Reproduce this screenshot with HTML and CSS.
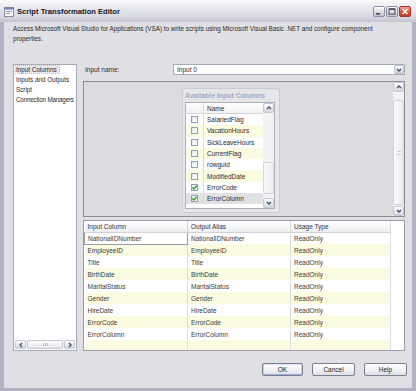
FILE: index.html
```html
<!DOCTYPE html>
<html>
<head>
<meta charset="utf-8">
<link rel="stylesheet" href="styles.css">
</head>
<body>
<div class="window">
  <div class="titlebar">
    <svg class="appicon" viewBox="0 0 10 11" width="10" height="11">
      <rect x="0.5" y="1.5" width="9" height="9" fill="#f4f4f4" stroke="#8a8a9a"/>
      <rect x="0.5" y="1.5" width="9" height="2" fill="#6f84b0"/>
      <rect x="2" y="5" width="6" height="1" fill="#9a9aa8"/>
      <rect x="2" y="7" width="4" height="1" fill="#9a9aa8"/>
    </svg>
    <span class="title">Script Transformation Editor</span>
    <div class="controls">
      <span class="cbtn"><svg viewBox="0 0 12 11" width="12" height="11"><rect x="3" y="7" width="4" height="1.6" fill="#4a4a5a"/></svg></span>
      <span class="cbtn"><svg viewBox="0 0 12 11" width="12" height="11"><rect x="3" y="2.8" width="6" height="5.4" fill="none" stroke="#4a4a5a" stroke-width="1"/><rect x="3" y="2.5" width="6" height="1.4" fill="#4a4a5a"/></svg></span>
      <span class="cbtn close"><svg viewBox="0 0 12 11" width="12" height="11"><path d="M3.5 3 L8.5 8 M8.5 3 L3.5 8" stroke="#fff" stroke-width="1.6"/></svg></span>
    </div>
  </div>
  <div class="frame">
    <p class="desc">Access Microsoft Visual Studio for Applications (VSA) to write scripts using Microsoft Visual Basic .NET and configure component<br>properties.</p>
    <div class="main">
      <div class="nav">
        <ul class="navlist">
          <li><span class="navsel">Input Columns</span></li>
          <li>Inputs and Outputs</li>
          <li>Script</li>
          <li class="tight">Connection Managers</li>
        </ul>
        <div class="hscroll">
          <span class="sbtn"><svg viewBox="0 0 6 6" width="6" height="6"><path d="M4 1 L2 3 L4 5" fill="none" stroke="#3d4f73" stroke-width="1.3"/></svg></span>
          <span class="hthumb"><span class="grip-h"></span></span>
          <span class="sbtn"><svg viewBox="0 0 6 6" width="6" height="6"><path d="M2 1 L4 3 L2 5" fill="none" stroke="#3d4f73" stroke-width="1.3"/></svg></span>
        </div>
      </div>
      <div class="content">
        <div class="namerow">
          <span class="namelabel">Input name:</span>
          <div class="combo">
            <span class="comboval">Input 0</span>
            <span class="ddbtn"><svg viewBox="0 0 6 6" width="6" height="6"><path d="M1 2 L3 4 L5 2" fill="none" stroke="#3d4f73" stroke-width="1.4"/></svg></span>
          </div>
        </div>
        <div class="upper">
          <div class="canvas">
            <div class="avail">
              <div class="availtitle">Available Input Columns</div>
              <div class="ilist">
                <div class="irows">
                  <div class="irow ihead"><span class="ichk"></span><span class="iname">Name</span></div>
                  <div class="irow"><span class="ichk"><span class="cb"></span></span><span class="iname">SalariedFlag</span></div>
                  <div class="irow y"><span class="ichk"><span class="cb"></span></span><span class="iname">VacationHours</span></div>
                  <div class="irow"><span class="ichk"><span class="cb"></span></span><span class="iname">SickLeaveHours</span></div>
                  <div class="irow y"><span class="ichk"><span class="cb"></span></span><span class="iname">CurrentFlag</span></div>
                  <div class="irow"><span class="ichk"><span class="cb"></span></span><span class="iname">rowguid</span></div>
                  <div class="irow y"><span class="ichk"><span class="cb"></span></span><span class="iname">ModifiedDate</span></div>
                  <div class="irow"><span class="ichk"><span class="cb on"><svg viewBox="0 0 7 7" width="7" height="7"><path d="M1.3 3.4 L2.9 5 L5.8 1.6" fill="none" stroke="#22a022" stroke-width="1.3"/></svg></span></span><span class="iname">ErrorCode</span></div>
                  <div class="irow sel"><span class="ichk"><span class="cb on"><svg viewBox="0 0 7 7" width="7" height="7"><path d="M1.3 3.4 L2.9 5 L5.8 1.6" fill="none" stroke="#22a022" stroke-width="1.3"/></svg></span></span><span class="iname">ErrorColumn</span></div>
                </div>
                <div class="vscroll small">
                  <span class="sbtn"><svg viewBox="0 0 6 6" width="6" height="6"><path d="M1 4 L3 2 L5 4" fill="none" stroke="#3d4f73" stroke-width="1.3"/></svg></span>
                  <span class="vtrack"><span class="vthumb small-thumb"></span></span>
                  <span class="sbtn"><svg viewBox="0 0 6 6" width="6" height="6"><path d="M1 2 L3 4 L5 2" fill="none" stroke="#3d4f73" stroke-width="1.3"/></svg></span>
                </div>
              </div>
            </div>
          </div>
          <div class="vscroll big">
            <span class="sbtn"><svg viewBox="0 0 6 6" width="6" height="6"><path d="M1 4 L3 2 L5 4" fill="none" stroke="#3d4f73" stroke-width="1.3"/></svg></span>
            <span class="vtrack"><span class="vthumb big-thumb"><span class="grip-v"></span></span></span>
            <span class="sbtn"><svg viewBox="0 0 6 6" width="6" height="6"><path d="M1 2 L3 4 L5 2" fill="none" stroke="#3d4f73" stroke-width="1.3"/></svg></span>
          </div>
        </div>
        <div class="splitter"></div>
        <div class="grid">
          <table class="gtable">
            <colgroup><col class="c1"><col class="c2"><col class="c3"></colgroup>
            <thead><tr><th>Input Column</th><th>Output Alias</th><th>Usage Type</th></tr></thead>
            <tbody>
              <tr><td class="focus">NationalIDNumber</td><td>NationalIDNumber</td><td>ReadOnly</td></tr>
              <tr class="y"><td>EmployeeID</td><td>EmployeeID</td><td>ReadOnly</td></tr>
              <tr><td>Title</td><td>Title</td><td>ReadOnly</td></tr>
              <tr class="y"><td>BirthDate</td><td>BirthDate</td><td>ReadOnly</td></tr>
              <tr><td>MaritalStatus</td><td>MaritalStatus</td><td>ReadOnly</td></tr>
              <tr class="y"><td>Gender</td><td>Gender</td><td>ReadOnly</td></tr>
              <tr><td>HireDate</td><td>HireDate</td><td>ReadOnly</td></tr>
              <tr class="y"><td>ErrorCode</td><td>ErrorCode</td><td>ReadOnly</td></tr>
              <tr><td>ErrorColumn</td><td>ErrorColumn</td><td>ReadOnly</td></tr>
              <tr class="y last"><td></td><td></td><td></td></tr>
            </tbody>
          </table>
        </div>
      </div>
    </div>
    <div class="footer">
      <button class="btn default">OK</button>
      <button class="btn wide">Cancel</button>
      <button class="btn wide">Help</button>
    </div>
  </div>
</div>
</body>
</html>
```

FILE: styles.css
```css
* { box-sizing: border-box; margin: 0; padding: 0; }
html, body { width: 416px; height: 391px; overflow: hidden; background: #ffffff; }
body { font-family: "Liberation Sans", Arial, sans-serif; font-size: 6.5px; color: #2a2a2a; }

.window {
  width: 416px; height: 391px;
  display: flex; flex-direction: column;
  background: #b3b2c4;
  border-radius: 6px 6px 0 0;
  overflow: hidden;
}

.titlebar {
  height: 22px; flex: none;
  display: flex; align-items: center;
  padding: 0 5px 0 4px;
  background: linear-gradient(to bottom, #fbfbfd 0%, #e9e9f0 35%, #d9d9e3 75%, #c4c4d3 100%);
}
.appicon { flex: none; margin-right: 3px; }
.title { flex: 1; font-weight: bold; font-size: 7.6px; color: #15151f; }
.controls { display: flex; gap: 1px; }
.cbtn {
  width: 12px; height: 11px; border-radius: 2px;
  display: flex;
  border: 1px solid #8f90a8;
  background: linear-gradient(to bottom, #ffffff, #d6d7e4 60%, #c2c3d6);
}
.cbtn svg { margin: -1px; }
.cbtn.close { border-color: #a3382a; background: linear-gradient(to bottom, #f2a493, #dd5a43 50%, #c53a27); }

.frame {
  flex: 1;
  margin: 0 4px 3px 4px;
  background: #e0dfe3;
  display: flex; flex-direction: column;
}

.desc { padding: 2px 9px 0 9px; font-size: 6.3px; line-height: 10px; height: 22px; color: #2a2a2a; }

.main {
  margin-top: 20px; height: 287px; flex: none;
  display: flex; gap: 6px;
  padding: 0 7px 0 9px;
}

.nav {
  width: 64px; flex: none;
  background: #ffffff;
  border: 1px solid #a7a9b6;
  display: flex; flex-direction: column;
  padding: 0 1px 1px 1px;
  overflow: hidden;
}
.navlist { list-style: none; flex: 1; }
.navlist li { height: 10px; line-height: 10px; padding-left: 1px; white-space: nowrap; font-size: 6.3px; }
.navlist li.tight { letter-spacing: -0.2px; }
.navsel { background: #e6e6ea; outline: 1px dotted #b8b8c0; padding: 0 2px 0 0; }

.hscroll { height: 9px; display: flex; background: #f2f2f4; }
.sbtn {
  width: 11px; height: 9px; flex: none;
  display: flex; align-items: center; justify-content: center;
  border: 1px solid #c6c8d2; border-radius: 2px;
  background: linear-gradient(to bottom, #ffffff, #e4e5ec 60%, #d4d6e0);
}
.hthumb {
  flex: 1; margin: 0 1px;
  border: 1px solid #c6c8d2; border-radius: 2px;
  background: linear-gradient(to bottom, #fcfcfd, #e6e7ee);
  display: flex; align-items: center; justify-content: center;
}
.grip-h { width: 5px; height: 3px; border-left: 1px solid #b9bbc6; border-right: 1px solid #b9bbc6; background: linear-gradient(to right, transparent 1px, #b9bbc6 1px, #b9bbc6 2px, transparent 2px); }

.content { flex: 1; display: flex; flex-direction: column; min-width: 0; }

.namerow { height: 11px; display: flex; align-items: center; flex: none; }
.namelabel { width: 90px; padding-left: 2px; flex: none; }
.combo {
  flex: 1; height: 11px;
  background: #ffffff; border: 1px solid #a5a9b8;
  display: flex; align-items: center;
}
.comboval { flex: 1; padding-left: 3px; }
.ddbtn {
  width: 10px; height: 9px; flex: none;
  display: flex; align-items: center; justify-content: center;
  border: 1px solid #c0c3d0; border-radius: 2px;
  background: linear-gradient(to bottom, #ffffff, #dfe1ea 60%, #cdd0dc);
}

.upper {
  margin-top: 6px; height: 136px; flex: none;
  border: 1px solid #8d8d98;
  background: #dcdbe0;
  display: flex;
}
.canvas { flex: 1; padding: 6px 0 0 98px; }
.avail {
  width: 98px; height: 125px;
  border: 1px solid #cbcbd4; border-radius: 3px;
  background: #e6e6ea;
  padding: 0 0 0 2px;
}
.availtitle { height: 13px; line-height: 14px; font-weight: bold; font-size: 6.9px; color: #a5a9b9; white-space: nowrap; }
.ilist {
  width: 90px; height: 107px;
  border: 1px solid #aeb0bc;
  background: #ffffff;
  display: flex;
}
.irows { flex: 1; display: flex; flex-direction: column; }
.irow { height: 11.3px; display: flex; align-items: center; }
.irow.ihead { height: 11px; background: linear-gradient(to bottom, #ffffff, #f1f1f3); border-bottom: 1px solid #d6d6dc; }
.irow.y { background: #fbfbe1; }
.irow.sel { background: #e1e1e4; }
.ichk { width: 17px; height: 100%; flex: none; display: flex; align-items: center; justify-content: center; }
.iname { flex: 1; height: 100%; display: flex; align-items: center; padding-left: 3px; border-left: 1px solid #dcdce2; white-space: nowrap; overflow: hidden; }
.cb {
  width: 7px; height: 7px; display: flex;
  border: 1px solid #8ba0bd;
  background: linear-gradient(135deg, #e6e8ef, #ffffff);
}
.cb svg { margin: -1px; }

.vscroll { display: flex; flex-direction: column; background: #f2f2f5; flex: none; width: 11px; }
.vscroll .sbtn { width: 11px; height: 10px; }
.vtrack { flex: 1; display: flex; flex-direction: column; }
.vthumb {
  border: 1px solid #d0d2dc; border-radius: 2px;
  background: linear-gradient(to right, #fbfbfc, #ebecf1);
  display: flex; align-items: center; justify-content: center;
}
.small-thumb { margin-top: 49px; height: 32px; opacity: 0.8; }
.big-thumb { margin-top: 8px; height: 105px; }
.grip-v { width: 4px; height: 4px; border-top: 1px solid #c4c6d0; border-bottom: 1px solid #c4c6d0; }

.splitter { height: 3px; flex: none; }

.grid {
  flex: 1;
  border: 1px solid #9c9ca8;
  background: #ffffff;
  overflow: hidden;
}
.gtable { border-collapse: collapse; table-layout: fixed; width: 306px; }
.c1 { width: 103px; }
.c2 { width: 103px; }
.c3 { width: 100px; }
.gtable th {
  height: 11px; font-weight: normal; text-align: left;
  padding: 0 0 0 3px;
  background: linear-gradient(to bottom, #ffffff, #eeeef1);
  border-bottom: 1px solid #d2d2d8;
  border-right: 1px solid #d6d6dc;
  color: #333;
}
.gtable td {
  height: 12px; padding: 0 0 0 3px;
  border-right: 1px solid #dedee2;
  white-space: nowrap; overflow: hidden;
  color: #3a3a3a;
}
.gtable tr.y td { background: #fbfbe1; }
.gtable td.focus { border: 1px solid #9a9aa4; background: #ffffff; }
.gtable tr.last td { height: 10px; }

.footer {
  display: flex; justify-content: flex-end; gap: 9px;
  padding-right: 5px; margin-top: 12px;
}
.btn {
  width: 43px; height: 13px;
  font-family: "Liberation Sans", Arial, sans-serif; font-size: 6.5px; color: #222;
  border: 1px solid #7b7e8e; border-radius: 2px;
  background: linear-gradient(to bottom, #ffffff 0%, #f1f1f5 55%, #dcdde6 100%);
}
.btn.default { width: 41px; box-shadow: inset 0 -1px 0 #9bb0d8, inset 1px 0 0 #c5d3ee, inset -1px 0 0 #c5d3ee, inset 0 1px 0 #dfe7f7; }
```
